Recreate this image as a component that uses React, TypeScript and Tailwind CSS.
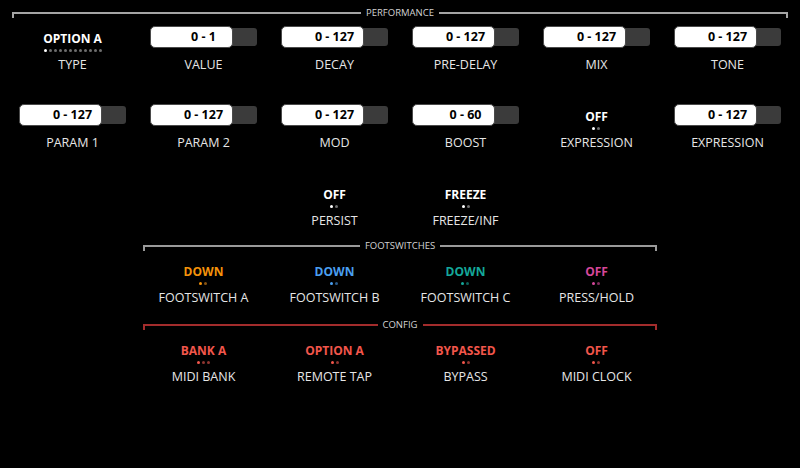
import React from 'react';

type Dot = { on: string; off: string };

interface Control {
  label: string;
  range?: string;
  value?: string;
  text?: string;
  dots?: number;
  dot?: Dot;
}

const WHITE: Dot = { on: 'bg-white', off: 'bg-[#6e6e6e]' };
const ORANGE: Dot = { on: 'bg-[#f5930a]', off: 'bg-[#8a5410]' };
const BLUE: Dot = { on: 'bg-[#4a9ff0]', off: 'bg-[#2a5a88]' };
const TEAL: Dot = { on: 'bg-[#14a89a]', off: 'bg-[#0d615a]' };
const PINK: Dot = { on: 'bg-[#d6479a]', off: 'bg-[#7e2c5c]' };
const RED: Dot = { on: 'bg-[#f2564b]', off: 'bg-[#8e3530]' };

const performance: (Control | null)[] = [
  { label: 'TYPE', value: 'OPTION A', text: 'text-white', dots: 12, dot: WHITE },
  { label: 'VALUE', range: '0 - 1' },
  { label: 'DECAY', range: '0 - 127' },
  { label: 'PRE-DELAY', range: '0 - 127' },
  { label: 'MIX', range: '0 - 127' },
  { label: 'TONE', range: '0 - 127' },
  { label: 'PARAM 1', range: '0 - 127' },
  { label: 'PARAM 2', range: '0 - 127' },
  { label: 'MOD', range: '0 - 127' },
  { label: 'BOOST', range: '0 - 60' },
  { label: 'EXPRESSION', value: 'OFF', text: 'text-white', dots: 2, dot: WHITE },
  { label: 'EXPRESSION', range: '0 - 127' },
  null,
  null,
  { label: 'PERSIST', value: 'OFF', text: 'text-white', dots: 2, dot: WHITE },
  { label: 'FREEZE/INF', value: 'FREEZE', text: 'text-white', dots: 2, dot: WHITE },
  null,
  null,
];

const footswitches: Control[] = [
  { label: 'FOOTSWITCH A', value: 'DOWN', text: 'text-[#f5930a]', dots: 2, dot: ORANGE },
  { label: 'FOOTSWITCH B', value: 'DOWN', text: 'text-[#4a9ff0]', dots: 2, dot: BLUE },
  { label: 'FOOTSWITCH C', value: 'DOWN', text: 'text-[#14a89a]', dots: 2, dot: TEAL },
  { label: 'PRESS/HOLD', value: 'OFF', text: 'text-[#d6479a]', dots: 2, dot: PINK },
];

const config: Control[] = [
  { label: 'MIDI BANK', value: 'BANK A', text: 'text-[#f2564b]', dots: 3, dot: RED },
  { label: 'REMOTE TAP', value: 'OPTION A', text: 'text-[#f2564b]', dots: 2, dot: RED },
  { label: 'BYPASS', value: 'BYPASSED', text: 'text-[#f2564b]', dots: 2, dot: RED },
  { label: 'MIDI CLOCK', value: 'OFF', text: 'text-[#f2564b]', dots: 2, dot: RED },
];

const SectionHeader = ({ title, line }: { title: string; line: string }) => (
  <div className="flex items-start h-[26px] pt-[7px] mx-[5px]">
    <div className={`flex-1 h-[6px] mt-[5px] border-t-2 border-l-2 ${line}`} />
    <span className="px-[5px] text-[9.5px] leading-[12px] text-[#d2d2d2]">{title}</span>
    <div className={`flex-1 h-[6px] mt-[5px] border-t-2 border-r-2 ${line}`} />
  </div>
);

const Range = ({ value }: { value: string }) => (
  <div className="relative w-[107px] h-[22px]">
    <div className="absolute inset-x-0 top-[2px] bottom-[2px] rounded-[3px] bg-[#3b3b3b]" />
    <div className="absolute left-0 top-0 bottom-0 w-[83px] rounded-[5px] bg-white border border-[#4a4a4a]" />
    <span className="absolute inset-0 flex items-center justify-center text-[12.5px] font-bold text-black">
      {value}
    </span>
  </div>
);

const Cell = ({ c }: { c: Control }) => (
  <div className="flex flex-col items-center">
    <div className="h-[26px] flex flex-col items-center">
      {c.range ? (
        <Range value={c.range} />
      ) : (
        <>
          <span className={`mt-[5px] text-[12px] leading-[16px] font-bold ${c.text}`}>{c.value}</span>
          <div className="flex gap-[2px] mt-[2px]">
            {Array.from({ length: c.dots ?? 0 }).map((_, i) => (
              <span
                key={i}
                className={`w-[3px] h-[3px] rounded-full ${i === 0 ? c.dot?.on : c.dot?.off}`}
              />
            ))}
          </div>
        </>
      )}
    </div>
    <span className="mt-[5px] text-[12.5px] leading-[16px] text-[#e6e6e6]">{c.label}</span>
  </div>
);

export default function App() {
  return (
    <div className="w-[800px] h-[468px] bg-black px-[7px] font-['Open_Sans',sans-serif] overflow-hidden">
      <SectionHeader title="PERFORMANCE" line="border-[#a4a4a4]" />
      <div className="grid grid-cols-6 gap-y-[31px]">
        {performance.map((c, i) => (c ? <Cell key={i} c={c} /> : <div key={i} />))}
      </div>

      <div className="grid grid-cols-6 mt-[4px]">
        <div className="col-start-2 col-span-4">
          <SectionHeader title="FOOTSWITCHES" line="border-[#9a9a9a]" />
          <div className="grid grid-cols-4">
            {footswitches.map((c, i) => (
              <Cell key={i} c={c} />
            ))}
          </div>

          <div className="mt-[6px]">
            <SectionHeader title="CONFIG" line="border-[#a32c2c]" />
            <div className="grid grid-cols-4">
              {config.map((c, i) => (
                <Cell key={i} c={c} />
              ))}
            </div>
          </div>
        </div>
      </div>
    </div>
  );
}
